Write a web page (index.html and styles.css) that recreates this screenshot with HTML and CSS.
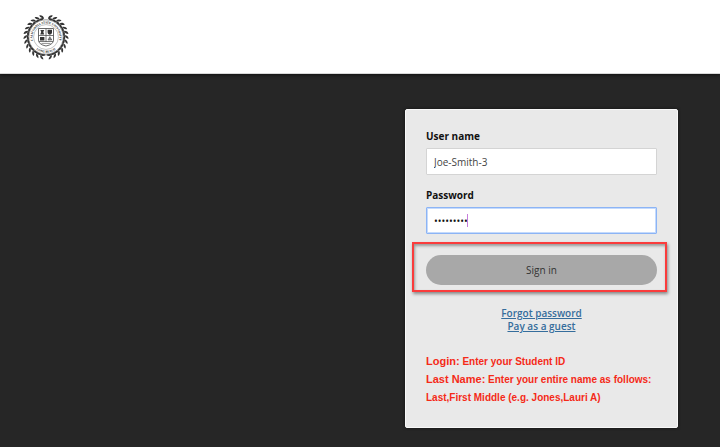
FILE: index.html
```html
<!DOCTYPE html>
<html lang="en">
<head>
<meta charset="utf-8">
<meta name="viewport" content="width=device-width, initial-scale=1">
<title>Sign in</title>
<link rel="stylesheet" href="styles.css">
</head>
<body>
<header class="site-header">
  <svg class="seal" viewBox="0 0 46 46" role="img" aria-label="California State University Long Beach">
    <defs>
      <g id="leaf">
        <path d="M23 4.2C21 4 19 2.5 18.6.8C20.7.5 22.6 1.8 23 4.2Z"/>
        <path d="M23 4.2C21.4 6.4 19.4 6.8 17.5 5.8C19 3.9 21 3.3 23 4.2Z"/>
      </g>
      <g id="branch">
        <use href="#leaf" transform="rotate(-6 23 23)"/>
        <use href="#leaf" transform="rotate(-19 23 23)"/>
        <use href="#leaf" transform="rotate(-32 23 23)"/>
        <use href="#leaf" transform="rotate(-45 23 23)"/>
        <use href="#leaf" transform="rotate(-58 23 23)"/>
        <use href="#leaf" transform="rotate(-71 23 23)"/>
        <use href="#leaf" transform="rotate(-84 23 23)"/>
        <use href="#leaf" transform="rotate(-97 23 23)"/>
        <use href="#leaf" transform="rotate(-110 23 23)"/>
        <use href="#leaf" transform="rotate(-123 23 23)"/>
        <use href="#leaf" transform="rotate(-136 23 23)"/>
        <use href="#leaf" transform="rotate(-149 23 23)"/>
        <use href="#leaf" transform="rotate(-162 23 23)"/>
      </g>
      <path id="arc-top" d="M11.3 29.8A13.5 13.5 0 1 1 34.7 29.8"/>
      <path id="arc-bottom" d="M10.5 32.5A15.7 15.7 0 0 0 35.5 32.5"/>
    </defs>
    <g fill="#333">
      <use href="#branch"/>
      <use href="#branch" transform="translate(46 0) scale(-1 1)"/>
    </g>
    <circle cx="23" cy="23" r="17.2" fill="#fff" stroke="#555" stroke-width=".6"/>
    <circle cx="23" cy="23" r="12.4" fill="none" stroke="#888" stroke-width=".5"/>
    <g class="seal-text">
      <text><textPath href="#arc-top" startOffset="50%">CALIFORNIA STATE UNIVERSITY</textPath></text>
      <text><textPath href="#arc-bottom" startOffset="50%">LONG BEACH</textPath></text>
    </g>
    <path d="M15.5 14.5H30.5V26Q30.5 30.5 23 32Q15.5 30.5 15.5 26Z" fill="#fff" stroke="#444" stroke-width=".8"/>
    <path d="M23 14.5V28M15.5 21.5H30.5M16 27.5H30" fill="none" stroke="#555" stroke-width=".8"/>
    <path d="M24.6 15.8H29V18.6Q29 20.5 26.8 20.8Q24.6 20.5 24.6 18.6ZM17 23H21.4V26.4H17ZM17.4 16H21.2L20.3 18L21.2 20.5H17.2L18.2 18Z" fill="#333"/>
    <path d="M25 26L26.8 22.7L28.8 26ZM18.5 29.4H27.5" fill="#888" stroke="#444" stroke-width=".6"/>
  </svg>
</header>
<main class="stage">
  <form class="card">
    <label class="label" for="user">User name</label>
    <input class="field" id="user" type="text" value="Joe-Smith-3">
    <label class="label" for="pass">Password</label>
    <div class="password">
      <input class="field field-active" id="pass" type="password" value="123456789">
      <span class="caret"></span>
    </div>
    <div class="action">
      <button class="submit" type="button">Sign in</button>
    </div>
    <nav class="links">
      <a href="#forgot">Forgot password</a>
      <a href="#guest">Pay as a guest</a>
    </nav>
    <p class="help"><strong>Login:</strong> Enter your Student ID<br><strong>Last Name:</strong> Enter your entire name as follows: Last,First Middle (e.g. Jones,Lauri A)</p>
  </form>
</main>
</body>
</html>
```
FILE: styles.css
```css
* { box-sizing: border-box; }
body {
  margin: 0;
  min-height: 100vh;
  display: flex;
  flex-direction: column;
  background: #262626;
  font-family: "Open Sans", "Noto Sans", sans-serif;
  font-size: 10px;
}
.site-header {
  padding: 14px 23px 13px;
  background: #fff;
  border-bottom: 1px solid #d8d8d8;
  box-shadow: 0 1px 3px #111;
}
.seal { display: block; width: 46px; height: 46px; }
.seal-text {
  font: bold 3px "Liberation Serif", serif;
  text-anchor: middle;
  fill: #111;
}
.stage {
  display: flex;
  justify-content: flex-end;
  padding: 35px 42px 19px;
}
.card {
  width: 38%;
  min-width: 273px;
  padding: 19px 20px 20px;
  border: 1px solid #f8f8f8;
  border-radius: 2px;
  background: #e9e9e9;
  box-shadow: 0 0 3px #111;
}
.label {
  display: block;
  margin-bottom: 5px;
  line-height: 14px;
  font-weight: 700;
  color: #111;
}
.field {
  display: block;
  width: 100%;
  height: 27px;
  margin-bottom: 13px;
  padding: 0 7px;
  border: 1px solid #d4d4d4;
  border-radius: 1px;
  outline: none;
  background: #fff;
  font: inherit;
  color: #444;
}
.password { position: relative; }
.field-active {
  border-color: #8cb4f5;
  box-shadow: inset 0 0 0 1px #c4dafc;
  color: #111;
}
.caret {
  position: absolute;
  left: 41px;
  top: 7px;
  width: 1px;
  height: 13px;
  background: #c77ddb;
}
.action {
  margin: -5px -10px 0 -14px;
  padding: 11px 8px 5px 12px;
  border: 2px solid #fa3c3c;
  box-shadow: 1px 2px 3px #888, inset 1px 2px 3px #999;
}
.submit {
  display: block;
  width: 100%;
  height: 30px;
  border: 0;
  border-radius: 15px;
  background: #a8a8a8;
  font: inherit;
  color: #333;
}
.links {
  display: flex;
  flex-direction: column;
  align-items: center;
  margin-top: 15px;
  line-height: 13px;
}
.links a { color: #356d9c; font-weight: 600; }
.help {
  margin: 20px 0 0;
  font-family: "Liberation Sans", Arial, sans-serif;
  font-weight: 700;
  line-height: 18px;
  color: #f52a18;
}
.help strong { font-size: 11px; line-height: 1; }
```
